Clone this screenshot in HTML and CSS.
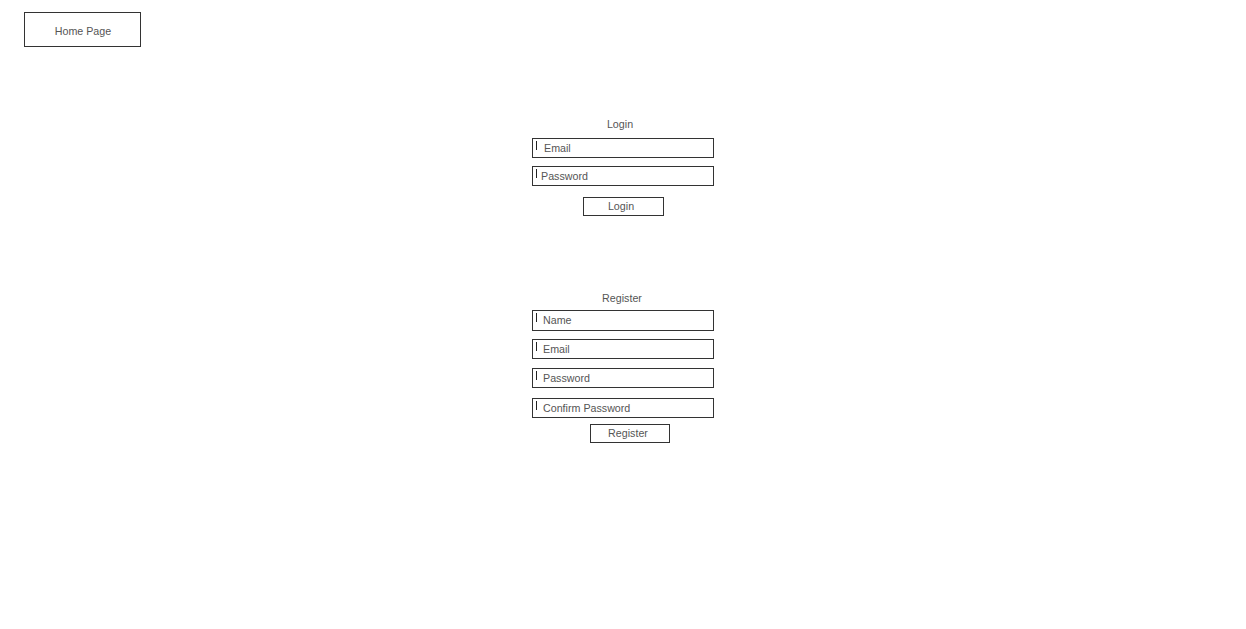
FILE: index.html
```html
<!DOCTYPE html>
<html lang="en">
<head>
<meta charset="utf-8">
<title>Home Page</title>
<link rel="stylesheet" href="styles.css">
</head>
<body>
  <header class="top">
    <div class="home-box">Home Page</div>
  </header>
  <main class="auth">
    <section class="panel panel-login">
      <div class="panel-title title-login">Login</div>
      <div class="fields">
        <div class="field"><span class="caret"></span><span class="label gap-7">Email</span></div>
        <div class="field"><span class="caret"></span><span class="label gap-4">Password</span></div>
      </div>
      <div class="btn btn-login">Login</div>
    </section>
    <section class="panel panel-register">
      <div class="panel-title title-register">Register</div>
      <div class="fields fields-register">
        <div class="field field-name"><span class="caret"></span><span class="label gap-6">Name</span></div>
        <div class="field"><span class="caret"></span><span class="label gap-6">Email</span></div>
        <div class="field field-pass"><span class="caret"></span><span class="label gap-6">Password</span></div>
        <div class="field field-confirm"><span class="caret"></span><span class="label gap-6">Confirm Password</span></div>
      </div>
      <div class="btn btn-register">Register</div>
    </section>
  </main>
</body>
</html>
```

FILE: styles.css
```css
html, body {
  margin: 0;
  padding: 0;
  background: #ffffff;
}

body {
  font-family: "Liberation Sans", Arial, sans-serif;
  font-size: 10.7px;
  line-height: 13px;
  color: #555555;
}

.top {
  padding: 12px 0 0 24px;
}

.home-box {
  box-sizing: border-box;
  width: 117px;
  height: 35px;
  border: 1px solid #333333;
  display: flex;
  align-items: center;
  justify-content: center;
  padding-top: 3px;
  padding-left: 1px;
}

.auth {
  width: 182px;
  margin: 0 auto;
  display: flex;
  flex-direction: column;
}

.panel {
  display: flex;
  flex-direction: column;
}

.panel-login {
  margin-top: 71px;
}

.panel-register {
  margin-top: 76px;
}

.panel-title {
  text-align: center;
  height: 13px;
}

.title-login {
  padding-right: 6px;
  margin-bottom: 7px;
}

.title-register {
  padding-right: 2px;
  margin-bottom: 5px;
}

.fields {
  display: flex;
  flex-direction: column;
  gap: 8px;
}

.field {
  box-sizing: border-box;
  height: 20px;
  border: 1px solid #333333;
  display: flex;
  align-items: center;
  padding-left: 3px;
}

.field-name {
  height: 21px;
}

.field-pass {
  margin-top: 1px;
}

.field-confirm {
  margin-top: 2px;
}

.caret {
  align-self: flex-start;
  margin-top: 2px;
  width: 1px;
  height: 9px;
  background: #222222;
  flex: none;
}

.label {
  white-space: nowrap;
}

.gap-7 { margin-left: 7px; }
.gap-4 { margin-left: 4px; }
.gap-6 { margin-left: 6px; }

.btn {
  box-sizing: border-box;
  height: 19px;
  border: 1px solid #333333;
  display: flex;
  align-items: center;
  justify-content: center;
}

.btn-login {
  width: 81px;
  margin-top: 11px;
  margin-left: 51px;
  padding-right: 5px;
}

.btn-register {
  width: 80px;
  margin-top: 6px;
  margin-left: 58px;
  padding-right: 4px;
}
```
